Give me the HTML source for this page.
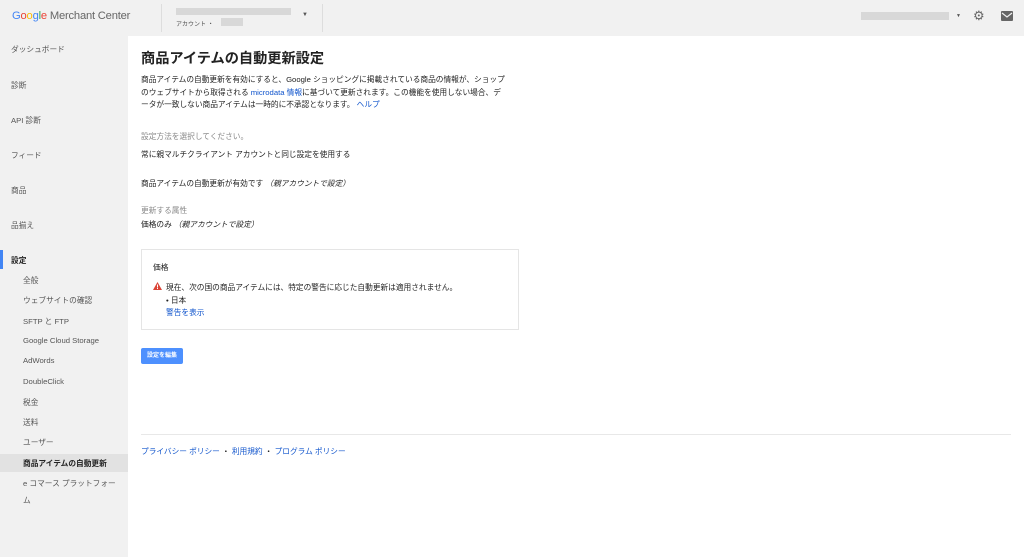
<!DOCTYPE html>
<html><head><meta charset="utf-8"><style>
*{margin:0;padding:0;box-sizing:border-box}
body{width:1024px;height:557px;overflow:hidden;background:#f1f1f1;font-family:"Liberation Sans","Noto Sans CJK JP",sans-serif;color:#222;position:relative}
.a{position:absolute;white-space:nowrap}
.s{font-size:7.7px;color:#555}
.m{font-size:7.7px;color:#222}
.g{color:#888}
.b{color:#15c}
</style></head><body>
<div class="a" style="left:12px;top:10px;font-size:11.2px;letter-spacing:-0.2px"><span style="color:#4285f4">G</span><span style="color:#ea4335">o</span><span style="color:#fbbc05">o</span><span style="color:#4285f4">g</span><span style="color:#34a853">l</span><span style="color:#ea4335">e</span> <span style="color:#666">Merchant Center</span></div>
<div class="a" style="left:161px;top:4px;width:1px;height:28px;background:#ddd"></div>
<div class="a" style="left:176px;top:8px;width:115px;height:7px;background:#d8d8d8"></div>
<div class="a" style="left:176px;top:19px;font-size:6px;color:#555">アカウント ・</div>
<div class="a" style="left:221px;top:18px;width:22px;height:8px;background:#d8d8d8"></div>
<div class="a" style="left:302px;top:12px;font-size:6px;color:#555">▼</div>
<div class="a" style="left:322px;top:4px;width:1px;height:28px;background:#ddd"></div>
<div class="a" style="left:861px;top:12px;width:88px;height:8px;background:#d8d8d8"></div>
<div class="a" style="left:956px;top:13px;font-size:5px;color:#555">▼</div>
<div class="a" style="left:973px;top:9px;font-size:13px;color:#666;line-height:13px">⚙</div>
<div class="a" style="left:1001px;top:11px;width:12px;height:10px;background:#666;border-radius:1px"></div>
<svg class="a" style="left:1001px;top:11px" width="12" height="10"><path d="M1 2L6 6L11 2" stroke="#f1f1f1" stroke-width="1.2" fill="none"/></svg>

<div class="a s" style="left:11px;top:44px">ダッシュボード</div>
<div class="a s" style="left:11px;top:80px">診断</div>
<div class="a s" style="left:11px;top:115px">API 診断</div>
<div class="a s" style="left:11px;top:150px">フィード</div>
<div class="a s" style="left:11px;top:185px">商品</div>
<div class="a s" style="left:11px;top:220px">品揃え</div>
<div class="a" style="left:0;top:250px;width:3px;height:19px;background:#4285f4"></div>
<div class="a m" style="left:11px;top:255px;font-weight:bold">設定</div>
<div class="a s" style="left:23px;top:275px">全般</div>
<div class="a s" style="left:23px;top:295px">ウェブサイトの確認</div>
<div class="a s" style="left:23px;top:316px">SFTP と FTP</div>
<div class="a s" style="left:23px;top:336px">Google Cloud Storage</div>
<div class="a s" style="left:23px;top:356px">AdWords</div>
<div class="a s" style="left:23px;top:377px">DoubleClick</div>
<div class="a s" style="left:23px;top:397px">税金</div>
<div class="a s" style="left:23px;top:417px">送料</div>
<div class="a s" style="left:23px;top:437px">ユーザー</div>
<div class="a" style="left:0;top:454px;width:128px;height:18px;background:#e2e2e2"></div>
<div class="a m" style="left:23px;top:458px;font-weight:bold">商品アイテムの自動更新</div>
<div class="a s" style="left:23px;top:478px">e コマース プラットフォー</div>
<div class="a s" style="left:23px;top:495px">ム</div>

<div class="a" style="left:128px;top:36px;width:896px;height:521px;background:#fff"></div>
<div class="a" style="left:141px;top:48px;font-size:14.2px;font-weight:bold;color:#222">商品アイテムの自動更新設定</div>
<div class="a m" style="left:141px;top:74px;line-height:12.5px">商品アイテムの自動更新を有効にすると、Google ショッピングに掲載されている商品の情報が、ショップ<br>のウェブサイトから取得される <span class="b">microdata 情報</span>に基づいて更新されます。この機能を使用しない場合、デ<br>ータが一致しない商品アイテムは一時的に不承認となります。 <span class="b">ヘルプ</span></div>
<div class="a m g" style="left:141px;top:131px">設定方法を選択してください。</div>
<div class="a m" style="left:141px;top:149px">常に親マルチクライアント アカウントと同じ設定を使用する</div>
<div class="a m" style="left:141px;top:178px">商品アイテムの自動更新が有効です <i>（親アカウントで設定）</i></div>
<div class="a m g" style="left:141px;top:205px">更新する属性</div>
<div class="a m" style="left:141px;top:219px">価格のみ <i>（親アカウントで設定）</i></div>
<div class="a" style="left:141px;top:249px;width:378px;height:81px;border:1px solid #e5e5e5"></div>
<div class="a m" style="left:153px;top:262px">価格</div>
<svg class="a" style="left:153px;top:282px" width="9" height="8"><path d="M4.5 0L9 8H0Z" fill="#db4437"/><rect x="4" y="2.5" width="1" height="3" fill="#fff"/><rect x="4" y="6" width="1" height="1" fill="#fff"/></svg>
<div class="a m" style="left:166px;top:282px">現在、次の国の商品アイテムには、特定の警告に応じた自動更新は適用されません。</div>
<div class="a m" style="left:166px;top:295px">• 日本</div>
<div class="a m b" style="left:166px;top:307px">警告を表示</div>
<div class="a" style="left:141px;top:348px;width:42px;height:16px;background:#4d90fe;border-radius:2px;color:#fff;font-size:6px;font-weight:bold;text-align:center;line-height:16px">設定を編集</div>
<div class="a" style="left:141px;top:434px;width:870px;height:1px;background:#e8e8e8"></div>
<div class="a m" style="left:141px;top:446px"><span class="b">プライバシー ポリシー</span> ・ <span class="b">利用規約</span> ・ <span class="b">プログラム ポリシー</span></div>
</body></html>
